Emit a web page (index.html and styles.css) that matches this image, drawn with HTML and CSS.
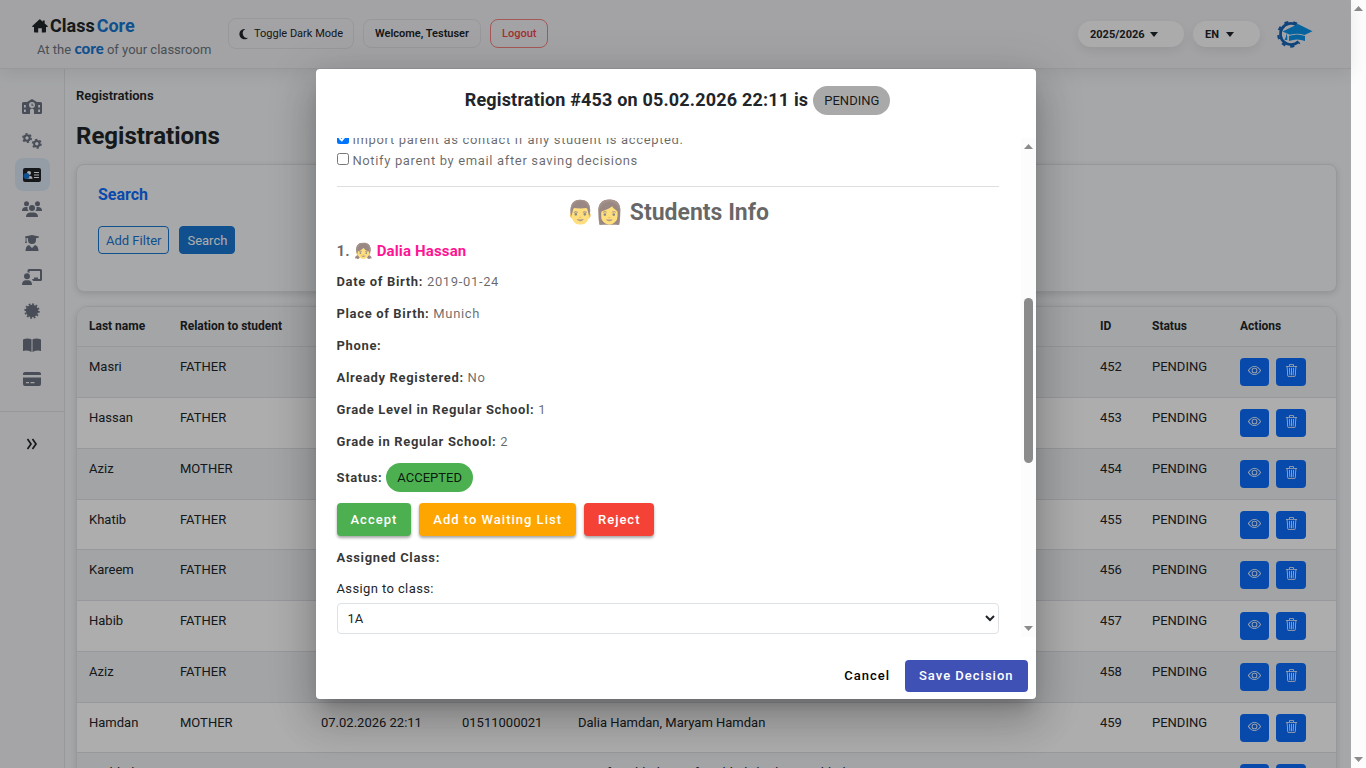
FILE: index.html
```html
<!DOCTYPE html>
<html lang="en">
<head>
    <meta charset="UTF-8">
    <meta name="viewport" content="width=device-width, initial-scale=1">
    <title>ClassCore - Registrations</title>
    <link rel="stylesheet" href="styles.css">
</head>
<body>
    <svg class="sprite" aria-hidden="true">
        <symbol id="eye" viewBox="0 0 16 16">
            <path d="M16 8s-3-5.5-8-5.5S0 8 0 8s3 5.5 8 5.5S16 8 16 8M1.173 8a13 13 0 0 1 1.66-2.043C4.12 4.668 5.88 3.5 8 3.5s3.879 1.168 5.168 2.457A13 13 0 0 1 14.828 8q-.086.13-.195.288c-.335.48-.83 1.12-1.465 1.755C11.879 11.332 10.119 12.5 8 12.5s-3.879-1.168-5.168-2.457A13 13 0 0 1 1.172 8z"/>
            <path d="M8 5.5a2.5 2.5 0 1 0 0 5 2.5 2.5 0 0 0 0-5M4.5 8a3.5 3.5 0 1 1 7 0 3.5 3.5 0 0 1-7 0"/>
        </symbol>
        <symbol id="trash" viewBox="0 0 16 16">
            <path d="M6.5 1h3a.5.5 0 0 1 .5.5v1H6v-1a.5.5 0 0 1 .5-.5M11 2.5v-1A1.5 1.5 0 0 0 9.5 0h-3A1.5 1.5 0 0 0 5 1.5v1H1.5a.5.5 0 0 0 0 1h.538l.853 10.66A2 2 0 0 0 4.885 16h6.23a2 2 0 0 0 1.994-1.84l.853-10.66h.538a.5.5 0 0 0 0-1zm1.958 1-.846 10.58a1 1 0 0 1-.997.92h-6.23a1 1 0 0 1-.997-.92L3.042 3.5zm-7.487 1a.5.5 0 0 1 .528.47l.5 8.5a.5.5 0 0 1-.998.06L5 5.03a.5.5 0 0 1 .47-.53Zm5.058 0a.5.5 0 0 1 .47.53l-.5 8.5a.5.5 0 1 1-.998-.06l.5-8.5a.5.5 0 0 1 .528-.47M8 4.5a.5.5 0 0 1 .5.5v8.5a.5.5 0 0 1-1 0V5a.5.5 0 0 1 .5-.5"/>
        </symbol>
        <symbol id="caret" viewBox="0 0 8 5"><path d="M0 0h8L4 5z"/></symbol>
    </svg>

    <div class="app">
        <header class="topbar">
            <div class="brand">
                <a href="#" class="brand-name">
                    <svg width="16" height="14" viewBox="0 0 16 14"><path d="M8 .3 10.800 2.700V1.500h1.900v2.900L15.700 7.100q.4.700-.4.800H14v4.700q0 .9-.9.900H9.800V9.300H6.200v4.200H2.900q-.9 0-.9-.9V7.900H.7q-.8-.1-.4-.8L7.300.6Q7.700.2 8 .3z"/></svg>
                    <span>Class</span><span class="blue">Core</span>
                </a>
                <p class="tagline">At the <b>core</b> of your classroom</p>
            </div>
            <button type="button" class="pill toggle">
                <svg width="10" height="12" viewBox="0 0 10 12"><path d="M6.300 1A5.200 5.200 0 1 0 9.300 9.800 4.700 4.700 0 0 1 6.300 1z"/></svg>
                Toggle Dark Mode
            </button>
            <button type="button" class="pill welcome">Welcome, Testuser</button>
            <button type="button" class="pill logout">Logout</button>
            <div class="topbar-right">
                <div class="picker year">
                    <select aria-label="School year"><option>2025/2026</option></select>
                    <svg width="8" height="5"><use href="#caret"/></svg>
                </div>
                <div class="picker lang">
                    <select aria-label="Language"><option>EN</option></select>
                    <svg width="8" height="5"><use href="#caret"/></svg>
                </div>
                <svg class="logo" width="38" height="30" viewBox="0 0 38 30">
                    <path d="M21.500 6A10.600 10.600 0 1 0 23.500 22.600" fill="none" stroke="#1663b5" stroke-width="2.800"/>
                    <path d="M22 4.800A12.300 12.300 0 1 0 24.500 23.600" fill="none" stroke="#1663b5" stroke-width="2.200" stroke-dasharray="4 5"/>
                    <path d="M7.500 12.500 23 5l14.500 7.300-8 3.600q-7-2.300-14.500-.2z" fill="#0a93e8"/>
                    <path d="M14 17q8-3 16 0v5q-8-3-16 0z" fill="#0a93e8"/>
                    <path d="M11 14v3.500L9.500 21h2.800v-3.500z" fill="#0a93e8"/>
                </svg>
            </div>
        </header>

        <div class="body">
            <nav class="sidebar">
                <a href="#" aria-label="School"><svg width="20" height="16" viewBox="0 0 20 16">
                    <path fill-rule="evenodd" d="M10 0 15 3h3.500Q20 3 20 4.500v9q0 1.500-1.500 1.500H12v-3.500a2 2 0 0 0-4 0V15H1.500Q0 15 0 13.500v-9Q0 3 1.500 3H5zM10 3a3 3 0 1 0 0 6 3 3 0 0 0 0-6M2 6v2.500h1.800V6zm14.200 0v2.500H18V6zM2 10.500V13h1.800v-2.500zm14.200 0V13H18v-2.500zM9.500 4.500h1v1.200h1v1h-2z"/></svg></a>
                <a href="#" aria-label="Settings"><svg class="line" width="20" height="16" viewBox="0 0 20 16">
                    <circle cx="5" cy="5" r="2.700" stroke-width="2"/><circle cx="5" cy="5" r="4.200" stroke-width="1.600" stroke-dasharray="2.200 2.200"/>
                    <circle cx="14.800" cy="10.800" r="2.700" stroke-width="2"/><circle cx="14.800" cy="10.800" r="4.200" stroke-width="1.600" stroke-dasharray="2.200 2.200"/></svg></a>
                <a href="#" class="active" aria-label="Registrations"><svg width="18" height="14" viewBox="0 0 18 14">
                    <rect width="18" height="14" rx="2"/><circle cx="6" cy="5" r="2" fill="#fff"/><path d="M2.500 10.800q0-3 3.500-3t3.500 3zM11 4h5v1h-5zM11 6.500h5v1h-5zM11 9h5v1h-5z" fill="#fff"/><circle cx="3.500" cy="8" r="3" fill="#1976d2"/></svg></a>
                <a href="#" aria-label="Contacts"><svg width="20" height="16" viewBox="0 0 20 16">
                    <circle cx="4.500" cy="2.800" r="2.500"/><circle cx="15.500" cy="2.800" r="2.500"/><circle cx="10" cy="7" r="3"/><path d="M0 10q0-4 4-4h1.500q-.5 2.500 1 4zM20 10q0-4-4-4h-1.500q.5 2.500-1 4zM4 16q0-4.600 4.500-4.600h3Q16 11.400 16 16z"/></svg></a>
                <a href="#" aria-label="Students"><svg width="16" height="16" viewBox="0 0 16 16">
                    <path d="M8 0 15 1.500v1L12 3.300V5a4 4 0 0 1-8 0V3.300L2.500 3v3L3 8H1l.6-2V2.700L1 2.500v-1zM5 10l3 3 3-3q3.500.8 3.500 6h-13Q1.500 10.800 5 10z"/></svg></a>
                <a href="#" aria-label="Teachers"><svg width="20" height="16" viewBox="0 0 20 16">
                    <path d="M7 0h11.500Q20 0 20 1.500v9q0 1.500-1.500 1.500H11l-1-2h2V8.500h4V10h2V2H7.500v2q-1-.7-2-.7V1.500Q5.500 0 7 0z"/><circle cx="5" cy="7.300" r="3"/><path d="M0 16q0-4.800 4-4.800h2q4 0 4 4.800z"/></svg></a>
                <a href="#" aria-label="Certificates"><svg width="16" height="16" viewBox="0 0 16 16">
                    <circle cx="8" cy="8" r="6.200"/><circle cx="8" cy="8" r="6.800" fill="none" stroke="currentColor" stroke-width="1.800" stroke-dasharray="1.800 1.760"/></svg></a>
                <a href="#" aria-label="Courses"><svg width="18" height="14" viewBox="0 0 18 14">
                    <path d="M0 1.600Q4-.6 8.500 1.200V14Q4 11.800 0 13zM18 1.600Q14-.6 9.500 1.200V14q4.500-2.200 8.500-1z"/></svg></a>
                <a href="#" aria-label="Payments"><svg width="18" height="14" viewBox="0 0 18 14">
                    <path fill-rule="evenodd" d="M2 0h14q2 0 2 2v1H0V2Q0 0 2 0M0 5.500h18V12q0 2-2 2H2q-2 0-2-2zM3 10v1.200h3V10zm4.500 0v1.200h4V10z"/></svg></a>
                <div class="sidebar-foot">
                    <button type="button" aria-label="Expand menu"><svg class="line" width="12" height="12" viewBox="0 0 12 12" stroke-width="1.700"><path d="M1.500 1 5 6l-3.500 5M6.500 1 10 6l-3.500 5"/></svg></button>
                </div>
            </nav>

            <main class="content">
                <div class="breadcrumb">Registrations</div>
                <h1>Registrations</h1>

                <section class="card search-card">
                    <h2>Search</h2>
                    <div class="search-actions">
                        <button type="button" class="btn btn-outline">Add Filter</button>
                        <button type="button" class="btn btn-primary">Search</button>
                    </div>
                </section>

                <div class="card table-card">
                    <table>
                        <colgroup>
                            <col class="c-name"><col class="c-wide"><col class="c-wide"><col class="c-phone"><col><col class="c-id"><col class="c-status"><col class="c-actions">
                        </colgroup>
                        <thead>
                            <tr><th>Last name</th><th>Relation to student</th><th></th><th></th><th></th><th>ID</th><th>Status</th><th>Actions</th></tr>
                        </thead>
                        <tbody id="rows"></tbody>
                    </table>
                </div>
            </main>
        </div>

        <div class="overlay">
            <div class="dialog" role="dialog" aria-modal="true" aria-labelledby="dialogTitle">
                <div class="dialog-title">
                    <h2 id="dialogTitle">Registration #453 on 05.02.2026 22:11 is</h2>
                    <span class="chip chip-pending">PENDING</span>
                </div>
                <div class="dialog-main">
                    <div class="dialog-content">
                        <div class="checks">
                            <div><input type="checkbox" id="importParent" checked> <label for="importParent">Import parent as contact if any student is accepted.</label></div>
                            <div><input type="checkbox" id="notifyParent"> <label for="notifyParent">Notify parent by email after saving decisions</label></div>
                        </div>
                        <hr>
                        <h3>👨👩 Students Info</h3>
                        <h4>1. 👧 <span class="girl">Dalia Hassan</span></h4>
                        <p><strong>Date of Birth:</strong> 2019-01-24</p>
                        <p><strong>Place of Birth:</strong> Munich</p>
                        <p><strong>Phone:</strong></p>
                        <p><strong>Already Registered:</strong> No</p>
                        <p><strong>Grade Level in Regular School:</strong> 1</p>
                        <p><strong>Grade in Regular School:</strong> 2</p>
                        <p class="status"><strong>Status:</strong> <span class="chip chip-accepted">ACCEPTED</span></p>
                        <div class="decision">
                            <button type="button" class="mat-btn accept">Accept</button>
                            <button type="button" class="mat-btn waiting">Add to Waiting List</button>
                            <button type="button" class="mat-btn reject">Reject</button>
                        </div>
                        <p><strong>Assigned Class:</strong></p>
                        <label class="class-label" for="classSelect">Assign to class:</label>
                        <select id="classSelect" class="class-select"><option>1A</option></select>
                    </div>
                    <div class="scrollbar">
                        <svg width="9" height="5" viewBox="0 0 9 5"><path d="M0 5h9L4.500 0z"/></svg>
                        <div class="track"><div class="thumb"></div></div>
                        <svg width="9" height="5" viewBox="0 0 9 5"><path d="M0 0h9L4.500 5z"/></svg>
                    </div>
                </div>
                <div class="dialog-actions">
                    <button type="button" class="mat-btn cancel">Cancel</button>
                    <button type="button" class="mat-btn save">Save Decision</button>
                </div>
            </div>
        </div>
    </div>
    <div class="scrollbar">
        <svg width="9" height="5" viewBox="0 0 9 5"><path d="M0 5h9L4.500 0z"/></svg>
        <div class="track"></div>
        <svg width="9" height="5" viewBox="0 0 9 5"><path d="M0 0h9L4.500 5z"/></svg>
    </div>

    <script>
        const registrations = [
            ['Masri', 'FATHER', '', '', '', 452],
            ['Hassan', 'FATHER', '', '', '', 453],
            ['Aziz', 'MOTHER', '', '', '', 454],
            ['Khatib', 'FATHER', '', '', '', 455],
            ['Kareem', 'FATHER', '', '', '', 456],
            ['Habib', 'FATHER', '', '', '', 457],
            ['Aziz', 'FATHER', '', '', '', 458],
            ['Hamdan', 'MOTHER', '07.02.2026 22:11', '01511000021', 'Dalia Hamdan, Maryam Hamdan', 459],
            ['Haddad', 'FATHER', '17.02.2026 22:11', '01511000014', 'Yusuf Haddad, Yusuf Haddad, Ibrahim Haddad', 460]
        ];

        document.getElementById('rows').innerHTML = registrations.map(r => `
            <tr>
                ${r.map(value => `<td>${value}</td>`).join('')}
                <td>PENDING</td>
                <td><div class="row-actions">
                    <button type="button" aria-label="View"><svg width="13" height="13"><use href="#eye"/></svg></button>
                    <button type="button" aria-label="Delete"><svg width="13" height="13"><use href="#trash"/></svg></button>
                </div></td>
            </tr>`).join('');
    </script>
</body>
</html>
```
FILE: styles.css
```css
* {
    box-sizing: border-box;
}
body {
    display: flex;
    height: 100vh;
    margin: 0;
    overflow: hidden;
    font-family: Roboto, sans-serif;
    font-size: 13px;
    line-height: 20px;
    color: #212529;
}
button, select, input {
    font-family: inherit;
}
button {
    cursor: pointer;
}
h1, h2, h3, h4, p {
    margin: 0;
}
a {
    color: inherit;
    text-decoration: none;
}
svg {
    fill: currentColor;
}
svg.line {
    fill: none;
    stroke: currentColor;
}
.sprite {
    position: absolute;
    width: 0;
    height: 0;
}
.app {
    position: relative;
    flex: 1;
    display: flex;
    flex-direction: column;
    min-width: 0;
    background: #f4f6f8;
}

/* top bar */
.topbar {
    position: relative;
    z-index: 1;
    display: flex;
    align-items: center;
    height: 69px;
    flex-shrink: 0;
    padding: 0 38px 0 32px;
    background: #f1f1f4;
    border-bottom: 1px solid #dfe1e6;
    box-shadow: 0 4px 16px rgba(0,0,0,0.08);
}
.brand {
    width: 196px;
    padding-top: 6px;
}
.brand-name {
    display: flex;
    align-items: center;
    gap: 2px;
    font-size: 18px;
    font-weight: 700;
    line-height: 24px;
}
.blue {
    color: #1976d2;
}
.tagline {
    padding-left: 5px;
    font-size: 13px;
    line-height: 20px;
    color: #6c757d;
    white-space: nowrap;
}
.tagline b {
    font-family: Lato, sans-serif;
    font-size: 15px;
    font-weight: 900;
    color: #1976d2;
}
.pill {
    height: 29px;
    margin-right: 9px;
    padding: 0 11px;
    background: none;
    border: 1px solid #e0e1e5;
    border-radius: 8px;
    font-size: 11px;
    font-weight: 600;
    color: #212529;
    white-space: nowrap;
    margin-bottom: 1px;
}
.toggle {
    display: flex;
    align-items: center;
    gap: 5px;
    height: 31px;
    padding: 0 10px;
    font-weight: 400;
}
.logout {
    font-weight: 500;
    color: #f04848;
    border-color: #f58080;
}
.topbar-right {
    display: flex;
    align-items: center;
    gap: 9px;
    margin-left: auto;
}
.picker {
    position: relative;
}
.picker select {
    width: 100%;
    height: 26px;
    padding: 0 12px;
    appearance: none;
    background: #fcfcfc;
    border: none;
    border-radius: 13px;
    box-shadow: 0 4px 12px rgba(0,0,0,0.08);
    font-size: 11px;
    font-weight: 700;
    color: #212529;
}
.picker svg {
    position: absolute;
    top: 11px;
    right: 26px;
}
.year {
    width: 106px;
}
.lang {
    width: 67px;
}
.logo {
    margin-left: 6px;
}

/* sidebar */
.body {
    flex: 1;
    display: flex;
    min-height: 0;
}
.sidebar {
    display: flex;
    flex-direction: column;
    align-items: center;
    gap: 1px;
    width: 65px;
    flex-shrink: 0;
    padding-top: 21px;
    background: #f3f4f6;
    border-right: 1px solid #dee1e6;
    color: #6b7280;
}
.sidebar a {
    display: flex;
    align-items: center;
    justify-content: center;
    width: 35px;
    height: 33px;
    border-radius: 8px;
}
.sidebar .active {
    background: #dbe6f4;
    color: #212529;
}
.sidebar-foot {
    display: flex;
    justify-content: center;
    width: 100%;
    margin-top: 15px;
    padding-top: 20px;
    border-top: 1px solid #dee1e6;
}
.sidebar-foot button {
    padding: 6px;
    background: none;
    border: none;
    color: #212529;
    line-height: 0;
}

/* page */
.content {
    flex: 1;
    min-width: 0;
    padding: 17px 14px 0 11px;
    overflow: hidden;
}
.breadcrumb {
    font-weight: 600;
}
h1 {
    margin: 12px 0 10px;
    font-size: 24px;
    font-weight: 700;
    line-height: 36px;
}
.card {
    border: 1px solid #dfe1e6;
    border-radius: 8px;
    background: #f7f8fa;
    box-shadow: 0 2px 6px rgba(0,0,0,0.12);
}
.search-card {
    height: 128px;
    padding: 18px 21px;
    margin-bottom: 14px;
}
.search-card h2 {
    margin-bottom: 19px;
    font-size: 16px;
    line-height: 24px;
    color: #0d6efd;
}
.search-actions {
    display: flex;
    gap: 10px;
}
.btn {
    height: 28px;
    padding: 0 7px;
    border: 1px solid #1976d2;
    border-radius: 4px;
    font-size: 13px;
}
.btn-outline {
    background: none;
    color: #1976d2;
}
.btn-primary {
    background: #1976d2;
    color: #fff;
}
.table-card {
    overflow: hidden;
    border-radius: 12px;
}
table {
    width: 100%;
    table-layout: fixed;
    border-collapse: collapse;
    text-align: left;
}
.c-name { width: 91px; }
.c-wide { width: 141px; }
.c-phone { width: 116px; }
.c-id { width: 52px; }
.c-status { width: 88px; }
.c-actions { width: 108px; }
th, td {
    padding: 0 12px;
    border-bottom: 1px solid #dee1e6;
    white-space: nowrap;
}
th {
    height: 39px;
    background: #f1f3f5;
    font-size: 12px;
    font-weight: 700;
}
td {
    height: 51px;
    padding-top: 10px;
    vertical-align: top;
    background: #fff;
}
tbody tr:nth-child(4n) td {
    height: 50px;
}
tbody tr:nth-child(odd) td {
    background: #f0f2f5;
}
.row-actions {
    display: flex;
    gap: 7px;
    padding-top: 1px;
}
.row-actions button {
    width: 29px;
    height: 28px;
    padding: 0;
    background: #0d6efd;
    border: none;
    border-radius: 4px;
    color: #fff;
}
.row-actions button + button {
    width: 30px;
}

/* dialog */
.overlay {
    position: absolute;
    inset: 0;
    z-index: 10;
    display: flex;
    align-items: center;
    justify-content: center;
    background: rgba(0,0,0,0.32);
}
.dialog {
    display: flex;
    flex-direction: column;
    width: 720px;
    max-width: 90%;
    background: #fff;
    border-radius: 4px;
    box-shadow: 0 11px 15px -7px rgba(0,0,0,0.2), 0 24px 38px 3px rgba(0,0,0,0.14), 0 9px 46px 8px rgba(0,0,0,0.12);
}
.dialog-title {
    display: flex;
    align-items: center;
    justify-content: center;
    gap: 5px;
    height: 69px;
    padding: 0 20px 6px 24px;
}
.dialog-title h2 {
    font-size: 18px;
    font-weight: 700;
    line-height: 24px;
    letter-spacing: 0.01em;
}
.chip {
    display: inline-block;
    padding: 0 11px;
    border-radius: 15px;
    font-size: 13px;
    line-height: 29px;
    color: rgba(0,0,0,0.87);
}
.chip-pending {
    background: #a9a9a9;
}
.chip-accepted {
    background: #4caf50;
}
.dialog-main {
    display: flex;
    height: 65vh;
}
.dialog-content {
    flex: 1;
    display: flex;
    flex-direction: column;
    justify-content: flex-end;
    padding: 0 22px 3px 21px;
    overflow: hidden;
    letter-spacing: 0.05em;
    line-height: 21px;
    color: rgba(0,0,0,0.6);
}
.checks input {
    width: 12px;
    height: 12px;
    margin: 0;
}
hr {
    width: 100%;
    margin: 15px 0 10px;
    border: none;
    border-top: 1px solid #dedede;
}
.dialog-content h3 {
    margin-bottom: 10px;
    font-size: 23px;
    line-height: 32px;
    text-align: center;
    letter-spacing: 0;
}
.dialog-content h4 {
    margin-bottom: 8px;
    font-size: 15px;
    line-height: 24px;
    letter-spacing: 0.01em;
}
.girl {
    color: #ff1493;
}
.dialog-content p {
    margin-bottom: 11px;
}
.dialog-content strong {
    color: rgba(0,0,0,0.8);
}
.status {
    line-height: 29px;
}
.status .chip {
    letter-spacing: 0;
}
.decision {
    display: flex;
    gap: 8px;
    margin-bottom: 11px;
}
.mat-btn {
    height: 33px;
    padding: 0 14px;
    border: none;
    border-radius: 4px;
    font-size: 13px;
    font-weight: 500;
    letter-spacing: 1px;
    color: #fff;
}
.decision .mat-btn {
    box-shadow: 0 2px 3px rgba(0,0,0,0.35);
}
.accept { background: #4caf50; }
.waiting { background: #ffa500; }
.reject { background: #f44336; }
.class-label {
    margin-bottom: 4px;
    line-height: 20px;
    letter-spacing: 0.03em;
    color: #212529;
}
.class-select {
    width: 100%;
    height: 31px;
    flex-shrink: 0;
    padding: 0 6px;
    background: #fff;
    border: 1px solid #dee2e6;
    border-radius: 4px;
    font-size: 13px;
    color: #212529;
}
.dialog-actions {
    display: flex;
    align-items: center;
    justify-content: flex-end;
    height: 62px;
    padding: 15px 8px 0;
}
.cancel {
    padding: 0 15px;
    background: none;
    color: #000;
}
.save {
    height: 32px;
    background: #3f51b5;
}

/* scrollbars */
.scrollbar {
    display: flex;
    flex-direction: column;
    align-items: center;
    width: 15px;
    flex-shrink: 0;
    padding: 6px 0;
    background: #fcfcfc;
    color: #8b8b8b;
}
.track {
    flex: 1;
    width: 9px;
    padding: 149px 0;
}
.thumb {
    height: 165px;
    border-radius: 5px;
    background: #8b8b8b;
}
```
